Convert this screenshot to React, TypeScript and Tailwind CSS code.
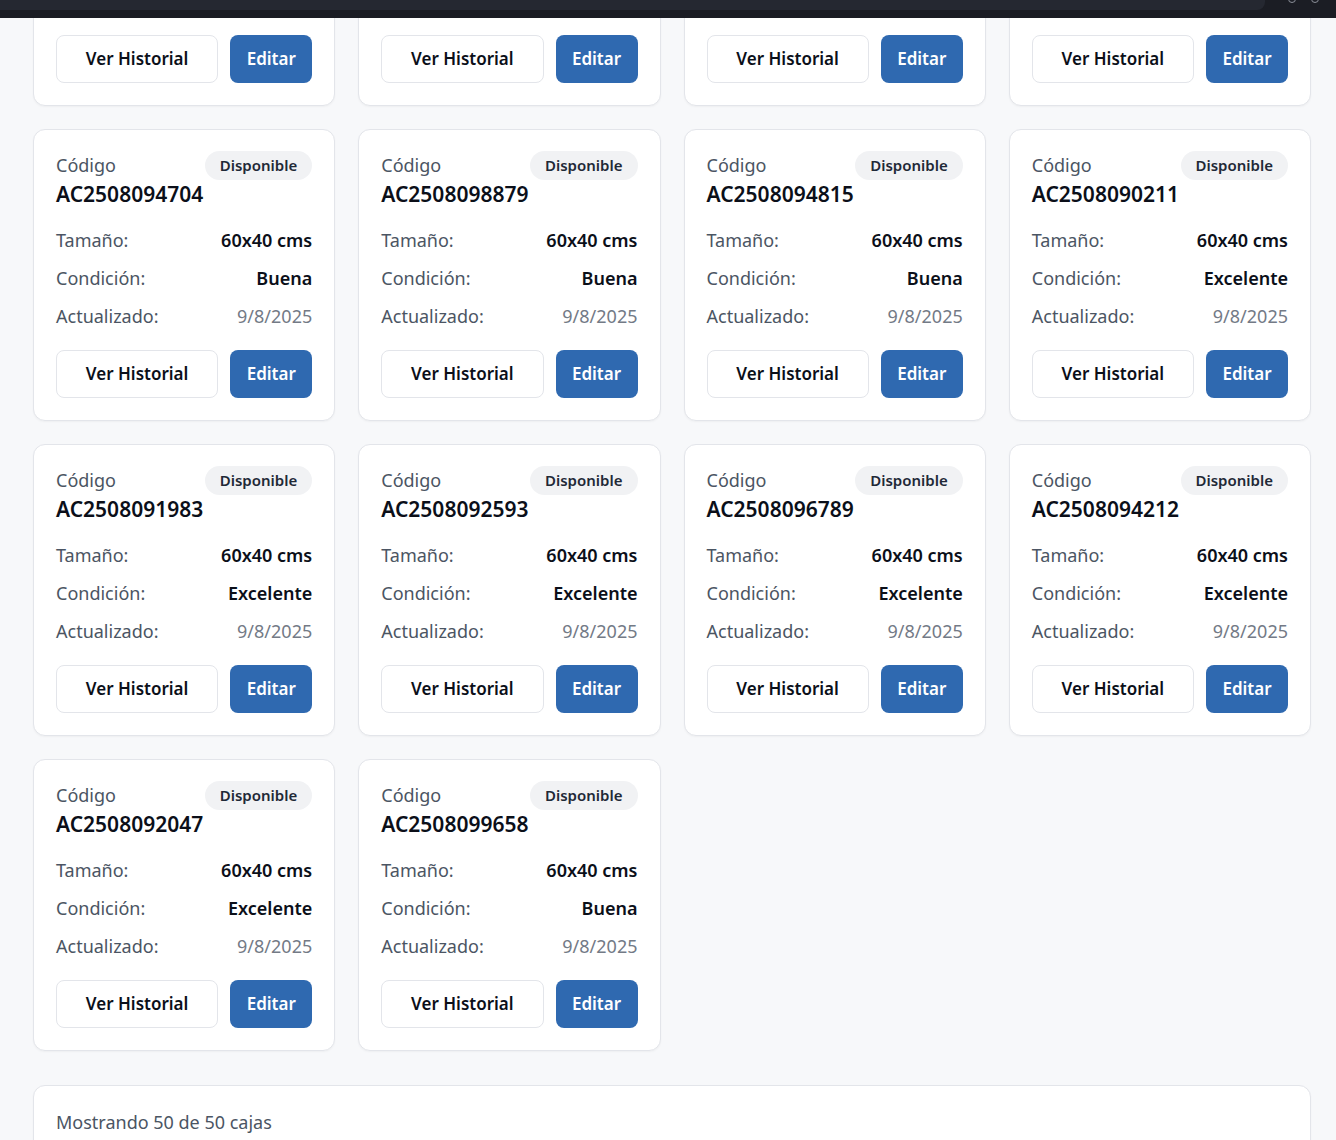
import React from 'react';

interface Caja {
  codigo: string;
  tamano: string;
  condicion: string;
  actualizado: string;
  estado: string;
}

const cajas: Caja[] = [
  { codigo: 'AC2508093318', tamano: '60x40 cms', condicion: 'Buena', actualizado: '9/8/2025', estado: 'Disponible' },
  { codigo: 'AC2508095541', tamano: '60x40 cms', condicion: 'Buena', actualizado: '9/8/2025', estado: 'Disponible' },
  { codigo: 'AC2508097126', tamano: '60x40 cms', condicion: 'Excelente', actualizado: '9/8/2025', estado: 'Disponible' },
  { codigo: 'AC2508091470', tamano: '60x40 cms', condicion: 'Buena', actualizado: '9/8/2025', estado: 'Disponible' },
  { codigo: 'AC2508094704', tamano: '60x40 cms', condicion: 'Buena', actualizado: '9/8/2025', estado: 'Disponible' },
  { codigo: 'AC2508098879', tamano: '60x40 cms', condicion: 'Buena', actualizado: '9/8/2025', estado: 'Disponible' },
  { codigo: 'AC2508094815', tamano: '60x40 cms', condicion: 'Buena', actualizado: '9/8/2025', estado: 'Disponible' },
  { codigo: 'AC2508090211', tamano: '60x40 cms', condicion: 'Excelente', actualizado: '9/8/2025', estado: 'Disponible' },
  { codigo: 'AC2508091983', tamano: '60x40 cms', condicion: 'Excelente', actualizado: '9/8/2025', estado: 'Disponible' },
  { codigo: 'AC2508092593', tamano: '60x40 cms', condicion: 'Excelente', actualizado: '9/8/2025', estado: 'Disponible' },
  { codigo: 'AC2508096789', tamano: '60x40 cms', condicion: 'Excelente', actualizado: '9/8/2025', estado: 'Disponible' },
  { codigo: 'AC2508094212', tamano: '60x40 cms', condicion: 'Excelente', actualizado: '9/8/2025', estado: 'Disponible' },
  { codigo: 'AC2508092047', tamano: '60x40 cms', condicion: 'Excelente', actualizado: '9/8/2025', estado: 'Disponible' },
  { codigo: 'AC2508099658', tamano: '60x40 cms', condicion: 'Buena', actualizado: '9/8/2025', estado: 'Disponible' },
];

const CajaCard: React.FC<{ caja: Caja }> = ({ caja }) => (
  <div className="bg-white border border-[#e3e5ea] rounded-xl shadow-[0_1px_2px_rgba(0,0,0,0.04)] p-[22px]">
    <div className="flex justify-between items-start">
      <div>
        <p className="text-[18px] leading-[27px] text-[#4b5563]">Código</p>
        <p className="text-[21px] leading-[31px] font-semibold text-[#0b0f19]">{caja.codigo}</p>
      </div>
      <span className="-mt-px bg-[#f1f2f4] rounded-full px-[15px] h-[29px] flex items-center text-[15px] font-semibold text-[#1f2937]">
        {caja.estado}
      </span>
    </div>

    <div className="mt-[16px] flex flex-col gap-[10px] text-[18px] leading-[28px]">
      <div className="flex justify-between">
        <span className="text-[#4b5563]">Tamaño:</span>
        <span className="font-semibold text-[#0b0f19]">{caja.tamano}</span>
      </div>
      <div className="flex justify-between">
        <span className="text-[#4b5563]">Condición:</span>
        <span className="font-semibold text-[#0b0f19]">{caja.condicion}</span>
      </div>
      <div className="flex justify-between">
        <span className="text-[#4b5563]">Actualizado:</span>
        <span className="text-[#737a86]">{caja.actualizado}</span>
      </div>
    </div>

    <div className="mt-[20px] flex gap-3">
      <button className="flex-1 h-[48px] rounded-lg border border-[#e3e5ea] bg-white text-[17px] font-semibold text-[#0b0f19]">
        Ver Historial
      </button>
      <button className="w-[82px] h-[48px] rounded-lg bg-[#2f69b0] text-[17px] font-semibold text-white">
        Editar
      </button>
    </div>
  </div>
);

export default function App() {
  return (
    <div
      className="relative min-h-screen bg-[#f7f8fa] overflow-hidden"
      style={{ fontFamily: '"Noto Sans", "Open Sans", sans-serif' }}
    >
      {/* barra superior fija */}
      <div className="absolute top-0 left-0 right-0 z-10 h-[18px] bg-[#1b1d24]">
        <div className="w-[1265px] h-[10px] bg-[#252831] rounded-br-lg" />
        <div className="absolute right-[40px] -top-[5px] w-[8px] h-[8px] rounded-sm border border-[#8b8f99]" />
        <div className="absolute right-[17px] -top-[5px] w-[8px] h-[8px] rounded-full border border-[#8b8f99]" />
      </div>

      <main className="-mt-[186px] pl-[33px] pr-[25px] pb-10">
        <div className="grid grid-cols-4 gap-x-[23px] gap-y-[23px]">
          {cajas.map((c) => (
            <CajaCard key={c.codigo} caja={c} />
          ))}
        </div>

        <div className="mt-[34px] bg-white border border-[#e3e5ea] rounded-xl shadow-[0_1px_2px_rgba(0,0,0,0.04)] p-[22px]">
          <p className="text-[18px] leading-[28px] text-[#4b5563]">Mostrando 50 de 50 cajas</p>
        </div>
      </main>
    </div>
  );
}
